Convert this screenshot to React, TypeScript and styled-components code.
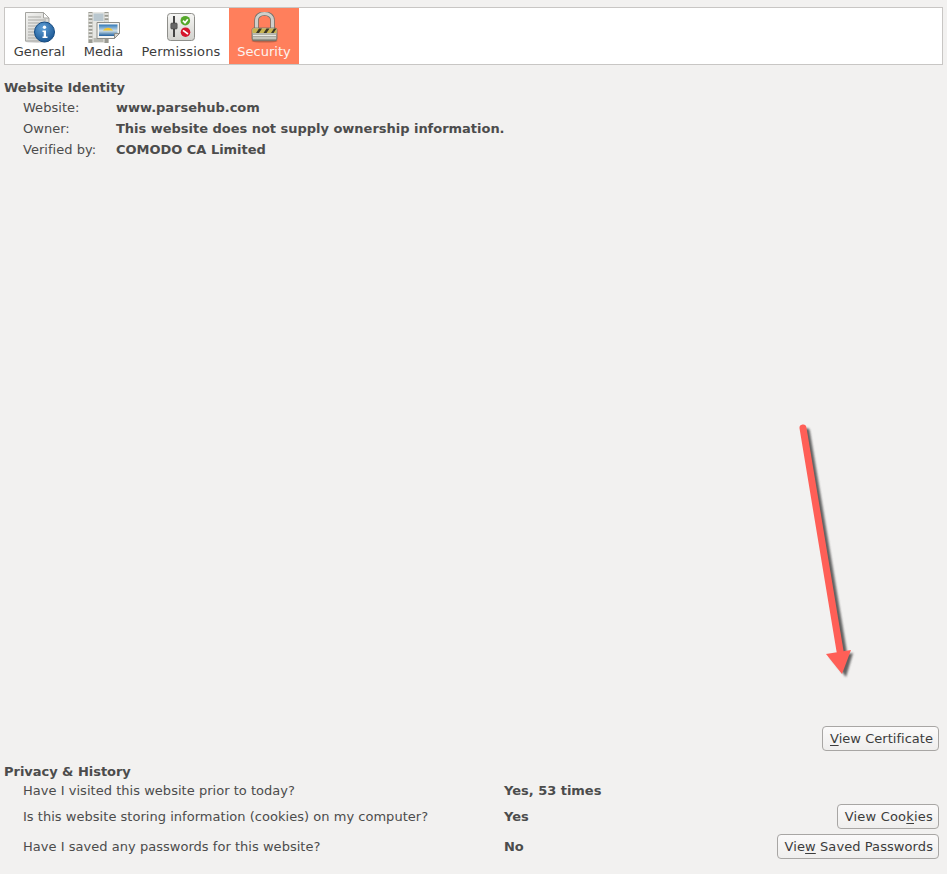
import React from "react";
import styled, { createGlobalStyle } from "styled-components";

const Global = createGlobalStyle`
  html, body { margin: 0; padding: 0; background: #f2f1f0; }
  body { font-family: "DejaVu Sans", sans-serif; font-size: 13px; color: #4c4c4c; letter-spacing: 0.03px; }
`;

const Page = styled.div`
  position: relative;
  width: 947px;
  height: 874px;
  overflow: hidden;
  display: flex;
  flex-direction: column;
  padding: 7px 4px 0;
  box-sizing: border-box;
`;

const Toolbar = styled.div`
  display: flex;
  height: 58px;
  box-sizing: border-box;
  background: #fff;
  border: 1px solid #c8c6c4;
  flex: none;
`;

const Tab = styled.div<{ $active?: boolean; $width: number }>`
  width: ${(p) => p.$width}px;
  display: flex;
  flex-direction: column;
  align-items: center;
  box-sizing: border-box;
  padding-top: 4px;
  background: ${(p) => (p.$active ? "#ff7f5c" : "transparent")};
  color: ${(p) => (p.$active ? "#fdf3ef" : "#3c3c3c")};
`;

const TabIcon = styled.svg`
  width: 32px;
  height: 32px;
  display: block;
  flex: none;
`;

const TabLabel = styled.span<{ $tracking: number }>`
  line-height: 15px;
  white-space: nowrap;
  letter-spacing: ${(p) => p.$tracking}px;
`;

const Heading = styled.div<{ $gap: number }>`
  font-weight: bold;
  line-height: 16px;
  letter-spacing: -0.03px;
  margin-bottom: ${(p) => p.$gap}px;
`;

const IdentitySection = styled.section`
  margin-top: 15px;
`;

const IdentityRow = styled.div`
  display: grid;
  grid-template-columns: 93px 1fr;
  padding-left: 19px;
  height: 21px;
  line-height: 21px;
`;

const Value = styled.span`
  font-weight: bold;
  white-space: nowrap;
  letter-spacing: -0.02px;
`;

const Spacer = styled.div`
  flex: 1;
`;

const CertRow = styled.div`
  display: flex;
  justify-content: flex-end;
  padding-right: 4px;
  margin-bottom: 13px;
`;

const Button = styled.div<{ $tracking: number }>`
  height: 25px;
  box-sizing: border-box;
  padding: 0 5px 0 7px;
  display: inline-flex;
  align-items: center;
  white-space: pre;
  border: 1px solid #a8a6a4;
  border-radius: 4px;
  background: linear-gradient(#fbfafa, #efeeed);
  color: #3c3c3c;
  letter-spacing: ${(p) => p.$tracking}px;
  u { text-underline-offset: 2px; }
`;

const PrivacySection = styled.section`
  margin-bottom: 13px;
`;

const PrivacyRow = styled.div<{ $height: number }>`
  display: grid;
  grid-template-columns: 481px 1fr auto;
  align-items: center;
  padding: 0 4px 0 19px;
  height: ${(p) => p.$height}px;
`;

const GeneralIcon = () => (
  <TabIcon viewBox="0 0 32 32">
    <defs>
      <linearGradient id="pg" x1="0" y1="0" x2="1" y2="1">
        <stop offset="0" stopColor="#f4f4f2" />
        <stop offset="1" stopColor="#c9c9c6" />
      </linearGradient>
      <radialGradient id="ig" cx="0.4" cy="0.3" r="0.8">
        <stop offset="0" stopColor="#5f9fd6" />
        <stop offset="1" stopColor="#14508e" />
      </radialGradient>
    </defs>
    <ellipse cx="13" cy="29.5" rx="12" ry="1.5" fill="#000" opacity="0.15" />
    <path d="M1.5 0.5h18l5.5 5.5v23H1.5z" fill="url(#pg)" stroke="#a4a4a0" />
    <path d="M19.5 0.5v5.5h5.5z" fill="#fff" stroke="#a4a4a0" />
    <path d="M4 5h13M4 8h18M4 11h18M4 14h18M4 17h11M4 20h9M4 23h9M4 26h9" stroke="#a9a9a5" strokeWidth="1" />
    <circle cx="20.5" cy="20" r="10" fill="url(#ig)" stroke="#134a82" />
    <circle cx="20.5" cy="15.2" r="1.7" fill="#fff" />
    <path d="M18.5 18.5h3.5v6h1.5V26h-5v-1.5h1.2V20h-1.2z" fill="#fff" />
  </TabIcon>
);

const MediaIcon = () => (
  <TabIcon viewBox="0 0 32 32">
    <defs>
      <linearGradient id="sky" x1="0" y1="0" x2="0" y2="1">
        <stop offset="0" stopColor="#2f77b8" />
        <stop offset="0.55" stopColor="#cfe0e6" />
        <stop offset="1" stopColor="#1f5f9e" />
      </linearGradient>
    </defs>
    <rect x="0" y="0" width="21" height="31" fill="#e6e6e2" />
    <rect x="0.5" y="0" width="4" height="31" fill="#9a9a92" />
    <rect x="16.5" y="0" width="4" height="31" fill="#9a9a92" />
    <path d="M0.5 2h4M0.5 5.5h4M0.5 9h4M0.5 12.5h4M0.5 16h4M0.5 19.5h4M0.5 23h4M0.5 26.5h4M16.5 2h4M16.5 5.5h4M16.5 9h4" stroke="#f2f2f0" strokeWidth="1.4" />
    <rect x="5.5" y="1.5" width="10" height="7.5" fill="#b9c7cf" />
    <rect x="5.5" y="26" width="10" height="4" fill="#b9b9b2" />
    <path d="M9 10.5h22.5v11l-5 5H9z" fill="#f5f5f3" stroke="#8d8d88" />
    <rect x="11" y="12.5" width="18.5" height="11.5" fill="url(#sky)" />
    <path d="M15 18.5a5.5 4.5 0 0 1 10 0z" fill="#f3c32b" />
    <path d="M26.5 26.5v-5h5z" fill="#d5d5d1" stroke="#8d8d88" />
  </TabIcon>
);

const PermissionsIcon = () => (
  <TabIcon viewBox="0 0 32 32">
    <defs>
      <linearGradient id="pb" x1="0" y1="0" x2="0" y2="1">
        <stop offset="0" stopColor="#f6f6f4" />
        <stop offset="1" stopColor="#d2d2ce" />
      </linearGradient>
    </defs>
    <rect x="2.5" y="1.5" width="27" height="27" rx="3" fill="url(#pb)" stroke="#8e8e8a" />
    <rect x="8" y="4" width="2" height="21" fill="#444" />
    <rect x="5.8" y="11" width="6.4" height="6" rx="1" fill="#666" stroke="#333" strokeWidth="0.5" />
    <circle cx="20.3" cy="8.7" r="4.8" fill="#55a82b" />
    <path d="M18 8.7l2 2 2.8-3.4" fill="none" stroke="#fff" strokeWidth="1.7" />
    <circle cx="20.5" cy="20.2" r="4.8" fill="#d5152c" />
    <path d="M18 18.4l5 3.6" stroke="#fff" strokeWidth="1.7" />
  </TabIcon>
);

const SecurityIcon = () => (
  <TabIcon viewBox="0 0 32 32">
    <defs>
      <linearGradient id="lk" x1="0" y1="0" x2="0" y2="1">
        <stop offset="0" stopColor="#d9d9d2" />
        <stop offset="1" stopColor="#8f8f84" />
      </linearGradient>
    </defs>
    <ellipse cx="16.5" cy="29" rx="13" ry="1.6" fill="#5a2a1a" opacity="0.35" />
    <path d="M8.5 17V8a8 6.5 0 0 1 16 0V17" fill="none" stroke="#75736c" strokeWidth="4.6" />
    <path d="M8.5 17V8a8 6.5 0 0 1 16 0V17" fill="none" stroke="#cfcfca" strokeWidth="3" />
    <rect x="4" y="16" width="25" height="12.7" rx="2" fill="url(#lk)" stroke="#6e6e66" strokeWidth="0.8" />
    <rect x="4.5" y="16.5" width="24" height="4.5" fill="#c8b450" />
    <path d="M8 21l3-4.5h3L11 21zM15.5 21l3-4.5h3L18.5 21zM23 21l3-4.5h2.5L25.5 21z" fill="#3a3526" />
    <path d="M5 23.5h23M5 26h23" stroke="#e9e9e2" strokeWidth="1" />
  </TabIcon>
);

const ArrowOverlay = styled.svg`
  position: absolute;
  left: 780px;
  top: 415px;
  width: 100px;
  height: 270px;
  pointer-events: none;
`;

export default function App() {
  return (
    <>
      <Global />
      <Page>
        <Toolbar>
          <Tab $width={69}>
            <GeneralIcon />
            <TabLabel $tracking={0.03}>General</TabLabel>
          </Tab>
          <Tab $width={59}>
            <MediaIcon />
            <TabLabel $tracking={0.13}>Media</TabLabel>
          </Tab>
          <Tab $width={96}>
            <PermissionsIcon />
            <TabLabel $tracking={0.2}>Permissions</TabLabel>
          </Tab>
          <Tab $width={70} $active>
            <SecurityIcon />
            <TabLabel $tracking={0}>Security</TabLabel>
          </Tab>
        </Toolbar>

        <IdentitySection>
          <Heading $gap={1}>Website Identity</Heading>
          <IdentityRow>
            <span>Website:</span>
            <Value>www.parsehub.com</Value>
          </IdentityRow>
          <IdentityRow>
            <span>Owner:</span>
            <Value>This website does not supply ownership information.</Value>
          </IdentityRow>
          <IdentityRow>
            <span>Verified by:</span>
            <Value>COMODO CA Limited</Value>
          </IdentityRow>
        </IdentitySection>

        <Spacer />

        <CertRow>
          <Button $tracking={0.03}>
            <span><u>V</u>iew Certificate</span>
          </Button>
        </CertRow>

        <PrivacySection>
          <Heading $gap={-1}>Privacy &amp; History</Heading>
          <PrivacyRow $height={22}>
            <span>Have I visited this website prior to today?</span>
            <Value>Yes, 53 times</Value>
          </PrivacyRow>
          <PrivacyRow $height={30}>
            <span>Is this website storing information (cookies) on my computer?</span>
            <Value>Yes</Value>
            <Button $tracking={0.2}>
              <span>View Coo<u>k</u>ies</span>
            </Button>
          </PrivacyRow>
          <PrivacyRow $height={30}>
            <span>Have I saved any passwords for this website?</span>
            <Value>No</Value>
            <Button $tracking={0.08}>
              <span>Vie<u>w</u> Saved Passwords</span>
            </Button>
          </PrivacyRow>
        </PrivacySection>

        <ArrowOverlay viewBox="0 0 100 270">
          <defs>
            <filter id="blur" x="-30%" y="-10%" width="160%" height="120%">
              <feGaussianBlur stdDeviation="1" />
            </filter>
          </defs>
          <g filter="url(#blur)" fill="#4a4a4a" stroke="#4a4a4a" opacity="0.85">
            <path d="M27 16L64 236" strokeWidth="5.5" strokeLinecap="round" fill="none" />
            <path d="M50 242L73 238L66 262z" strokeWidth="0" />
          </g>
          <path d="M23 13L60 236" stroke="#ff5f57" strokeWidth="7" strokeLinecap="round" fill="none" />
          <path d="M46 239L71 235L62 259z" fill="#ff5f57" />
        </ArrowOverlay>
      </Page>
    </>
  );
}
